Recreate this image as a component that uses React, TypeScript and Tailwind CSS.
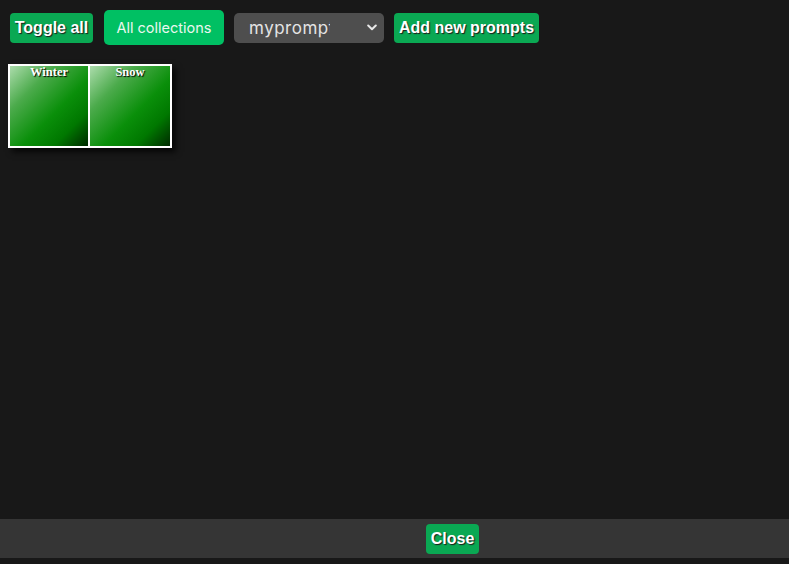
import type { FunctionComponent } from "react";

const cardBg =
  "bg-[linear-gradient(135deg,#acdcac_0%,#4cab4c_28%,#0a8f0a_58%,#007800_78%,#002a00_100%)]";

const Card: FunctionComponent<{ title: string; w: string }> = ({ title, w }) => (
  <div className={`${w} h-[80px] ${cardBg} flex justify-center`}>
    <span className="text-[12.5px] font-bold leading-[12px] text-white font-['Liberation_Serif',serif] [text-shadow:1px_1px_1px_#000]">
      {title}
    </span>
  </div>
);

const App: FunctionComponent = () => {
  return (
    <div className="w-[789px] h-[564px] bg-[#181818] flex flex-col overflow-hidden font-['Liberation_Sans',Arial,sans-serif]">
      {/* Toolbar */}
      <div className="flex items-center pl-[10px] pt-[10px] h-[45px]">
        <button className="w-[83px] h-[30px] rounded-[4px] bg-[#0aa853] text-white text-[16px] font-bold leading-none [text-shadow:1px_1px_1px_#1a1a1a]">
          Toggle all
        </button>
        <button className="ml-[11px] w-[120px] h-[35px] rounded-[5px] bg-[#00c063] text-[#eaf7ef] text-[14.5px] font-['Inter',sans-serif] leading-none pt-[2px]">
          All collections
        </button>
        <div className="ml-[10px] w-[150px] h-[30px] rounded-[5px] bg-[#4e4e4e] flex items-center">
          <div className="ml-[15px] w-[81px] overflow-hidden whitespace-nowrap text-[17px] tracking-[0.5px] leading-[20px] text-[#e4e4e4] font-['Inter',sans-serif] pt-[1px]">
            myprompt
          </div>
          <svg className="ml-auto mr-[7px]" width="10" height="7" viewBox="0 0 10 7" fill="none">
            <path d="M1.2 1.5 L5 5.2 L8.8 1.5" stroke="#e8e8e8" strokeWidth="2" strokeLinecap="round" strokeLinejoin="round" />
          </svg>
        </div>
        <button className="ml-[10px] w-[145px] h-[30px] rounded-[4px] bg-[#0aa853] text-white text-[16px] font-bold leading-none [text-shadow:1px_1px_1px_#1a1a1a]">
          Add new prompts
        </button>
      </div>

      {/* Cards */}
      <div className="pl-[8px] pt-[19px]">
        <div className="flex w-fit gap-[2px] p-[2px] bg-white shadow-[4px_4px_6px_rgba(0,0,0,0.75)]">
          <Card title="Winter" w="w-[78px]" />
          <Card title="Snow" w="w-[80px]" />
        </div>
      </div>

      <div className="flex-1" />

      {/* Footer */}
      <div className="h-[39px] bg-[#353535] flex items-center justify-center">
        <button className="ml-[116px] w-[53px] h-[30px] rounded-[4px] bg-[#0aa853] text-white text-[16px] font-bold leading-none [text-shadow:1px_1px_1px_#1a1a1a]">
          Close
        </button>
      </div>
      <div className="h-[6px]" />
    </div>
  );
};

export default App;
